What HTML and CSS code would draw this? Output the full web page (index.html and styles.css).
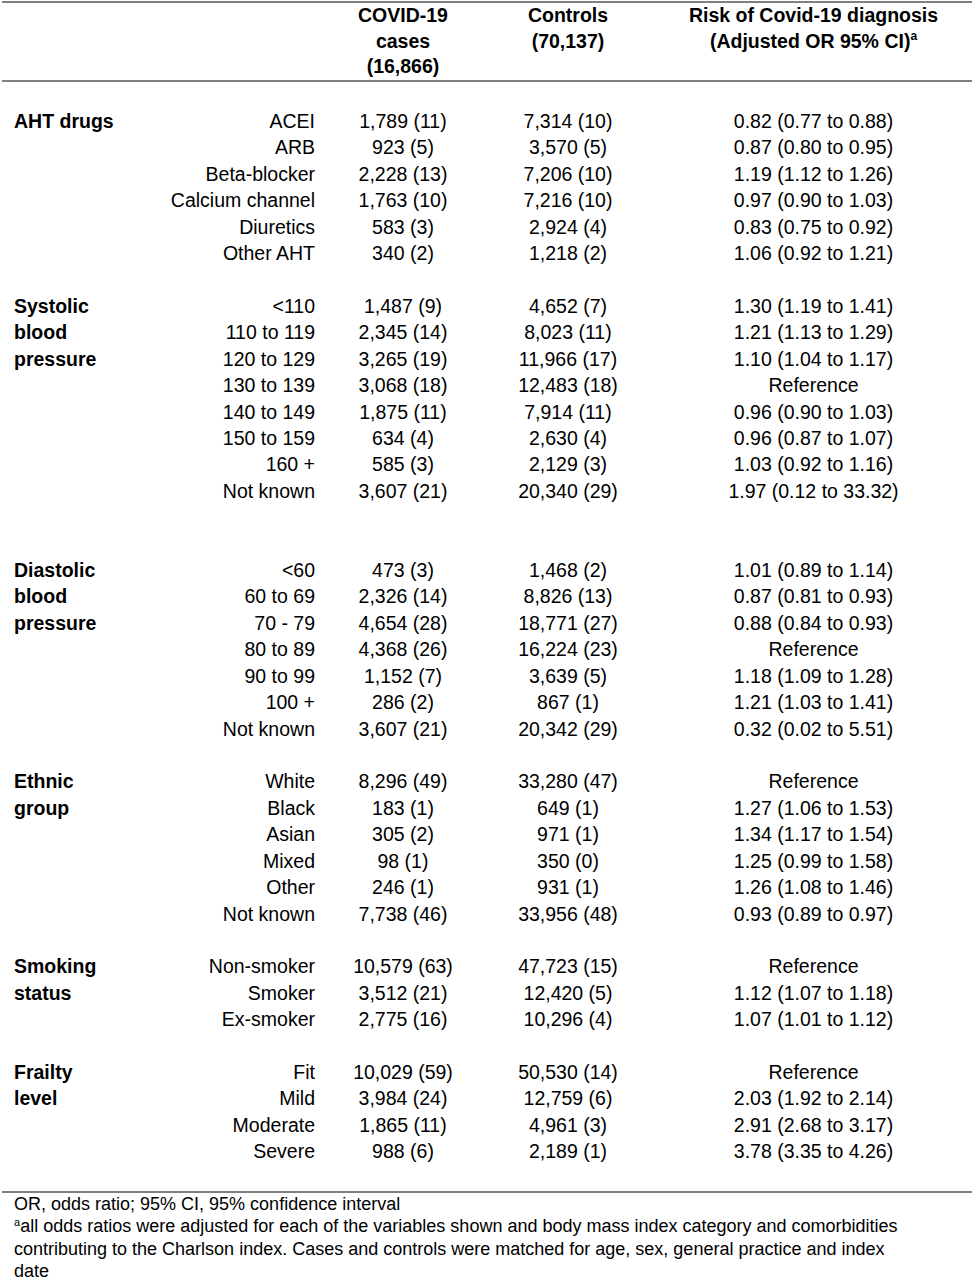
FILE: index.html
```html
<!DOCTYPE html>
<html>

<head>
  <meta charset="utf-8">
  <title>Risk of Covid-19 diagnosis</title>
  <link rel="stylesheet" href="styles.css">
</head>

<body>

  <table class="risk">
    <colgroup>
      <col class="c-group">
      <col class="c-level">
      <col class="c-cases">
      <col class="c-controls">
      <col class="c-risk">
    </colgroup>
    <thead>
      <tr>
        <th></th>
        <th></th>
        <th>COVID-19<br>cases<br>(16,866)</th>
        <th>Controls<br>(70,137)<br>&nbsp;</th>
        <th>Risk of Covid-19 diagnosis<br>(Adjusted OR 95% CI)<sup>a</sup><br>&nbsp;</th>
      </tr>
    </thead>
    <tbody>
      <tr class="gap"><td colspan="5"></td></tr>

      <tr><td class="group">AHT drugs</td><td class="level">ACEI</td><td>1,789 (11)</td><td>7,314 (10)</td><td>0.82 (0.77 to 0.88)</td></tr>
      <tr><td class="group"></td><td class="level">ARB</td><td>923 (5)</td><td>3,570 (5)</td><td>0.87 (0.80 to 0.95)</td></tr>
      <tr><td class="group"></td><td class="level">Beta-blocker</td><td>2,228 (13)</td><td>7,206 (10)</td><td>1.19 (1.12 to 1.26)</td></tr>
      <tr><td class="group"></td><td class="level">Calcium channel</td><td>1,763 (10)</td><td>7,216 (10)</td><td>0.97 (0.90 to 1.03)</td></tr>
      <tr><td class="group"></td><td class="level">Diuretics</td><td>583 (3)</td><td>2,924 (4)</td><td>0.83 (0.75 to 0.92)</td></tr>
      <tr><td class="group"></td><td class="level">Other AHT</td><td>340 (2)</td><td>1,218 (2)</td><td>1.06 (0.92 to 1.21)</td></tr>

      <tr class="gap"><td colspan="5"></td></tr>

      <tr><td class="group">Systolic</td><td class="level">&lt;110</td><td>1,487 (9)</td><td>4,652 (7)</td><td>1.30 (1.19 to 1.41)</td></tr>
      <tr><td class="group">blood</td><td class="level">110 to 119</td><td>2,345 (14)</td><td>8,023 (11)</td><td>1.21 (1.13 to 1.29)</td></tr>
      <tr><td class="group">pressure</td><td class="level">120 to 129</td><td>3,265 (19)</td><td>11,966 (17)</td><td>1.10 (1.04 to 1.17)</td></tr>
      <tr><td class="group"></td><td class="level">130 to 139</td><td>3,068 (18)</td><td>12,483 (18)</td><td>Reference</td></tr>
      <tr><td class="group"></td><td class="level">140 to 149</td><td>1,875 (11)</td><td>7,914 (11)</td><td>0.96 (0.90 to 1.03)</td></tr>
      <tr><td class="group"></td><td class="level">150 to 159</td><td>634 (4)</td><td>2,630 (4)</td><td>0.96 (0.87 to 1.07)</td></tr>
      <tr><td class="group"></td><td class="level">160 +</td><td>585 (3)</td><td>2,129 (3)</td><td>1.03 (0.92 to 1.16)</td></tr>
      <tr><td class="group"></td><td class="level">Not known</td><td>3,607 (21)</td><td>20,340 (29)</td><td>1.97 (0.12 to 33.32)</td></tr>

      <tr class="gap double"><td colspan="5"></td></tr>

      <tr><td class="group">Diastolic</td><td class="level">&lt;60</td><td>473 (3)</td><td>1,468 (2)</td><td>1.01 (0.89 to 1.14)</td></tr>
      <tr><td class="group">blood</td><td class="level">60 to 69</td><td>2,326 (14)</td><td>8,826 (13)</td><td>0.87 (0.81 to 0.93)</td></tr>
      <tr><td class="group">pressure</td><td class="level">70 - 79</td><td>4,654 (28)</td><td>18,771 (27)</td><td>0.88 (0.84 to 0.93)</td></tr>
      <tr><td class="group"></td><td class="level">80 to 89</td><td>4,368 (26)</td><td>16,224 (23)</td><td>Reference</td></tr>
      <tr><td class="group"></td><td class="level">90 to 99</td><td>1,152 (7)</td><td>3,639 (5)</td><td>1.18 (1.09 to 1.28)</td></tr>
      <tr><td class="group"></td><td class="level">100 +</td><td>286 (2)</td><td>867 (1)</td><td>1.21 (1.03 to 1.41)</td></tr>
      <tr><td class="group"></td><td class="level">Not known</td><td>3,607 (21)</td><td>20,342 (29)</td><td>0.32 (0.02 to 5.51)</td></tr>

      <tr class="gap"><td colspan="5"></td></tr>

      <tr><td class="group">Ethnic</td><td class="level">White</td><td>8,296 (49)</td><td>33,280 (47)</td><td>Reference</td></tr>
      <tr><td class="group">group</td><td class="level">Black</td><td>183 (1)</td><td>649 (1)</td><td>1.27 (1.06 to 1.53)</td></tr>
      <tr><td class="group"></td><td class="level">Asian</td><td>305 (2)</td><td>971 (1)</td><td>1.34 (1.17 to 1.54)</td></tr>
      <tr><td class="group"></td><td class="level">Mixed</td><td>98 (1)</td><td>350 (0)</td><td>1.25 (0.99 to 1.58)</td></tr>
      <tr><td class="group"></td><td class="level">Other</td><td>246 (1)</td><td>931 (1)</td><td>1.26 (1.08 to 1.46)</td></tr>
      <tr><td class="group"></td><td class="level">Not known</td><td>7,738 (46)</td><td>33,956 (48)</td><td>0.93 (0.89 to 0.97)</td></tr>

      <tr class="gap"><td colspan="5"></td></tr>

      <tr><td class="group">Smoking</td><td class="level">Non-smoker</td><td>10,579 (63)</td><td>47,723 (15)</td><td>Reference</td></tr>
      <tr><td class="group">status</td><td class="level">Smoker</td><td>3,512 (21)</td><td>12,420 (5)</td><td>1.12 (1.07 to 1.18)</td></tr>
      <tr><td class="group"></td><td class="level">Ex-smoker</td><td>2,775 (16)</td><td>10,296 (4)</td><td>1.07 (1.01 to 1.12)</td></tr>

      <tr class="gap"><td colspan="5"></td></tr>

      <tr><td class="group">Frailty</td><td class="level">Fit</td><td>10,029 (59)</td><td>50,530 (14)</td><td>Reference</td></tr>
      <tr><td class="group">level</td><td class="level">Mild</td><td>3,984 (24)</td><td>12,759 (6)</td><td>2.03 (1.92 to 2.14)</td></tr>
      <tr><td class="group"></td><td class="level">Moderate</td><td>1,865 (11)</td><td>4,961 (3)</td><td>2.91 (2.68 to 3.17)</td></tr>
      <tr><td class="group"></td><td class="level">Severe</td><td>988 (6)</td><td>2,189 (1)</td><td>3.78 (3.35 to 4.26)</td></tr>

      <tr class="gap"><td colspan="5"></td></tr>
    </tbody>
  </table>

  <div class="notes">
    <p>OR, odds ratio; 95% CI, 95% confidence interval</p>
    <p><sup>a</sup>all odds ratios were adjusted for each of the variables shown and body mass index category and comorbidities contributing to the Charlson index. Cases and controls were matched for age, sex, general practice and index date</p>
  </div>

</body>

</html>
```

FILE: styles.css
```css
body {
  margin: 0;
  background: #fff;
  color: #000;
  font-family: "Liberation Sans", Arial, sans-serif;
}

/* Main table */
.risk {
  margin: 1px 0 0 2px;
  width: 970px;
  table-layout: fixed;
  border-collapse: collapse;
  border-top: 2px solid #808080;
  border-bottom: 2px solid #808080;
  font-size: 19.5px;
}

.c-group {
  width: 158px;
}

.c-level {
  width: 165px;
}

.c-cases {
  width: 156px;
}

.c-controls {
  width: 174px;
}

.c-risk {
  width: 317px;
}

.risk th {
  padding: 0;
  font-weight: bold;
  line-height: 25.5px;
  text-align: center;
  vertical-align: top;
}

.risk thead tr {
  border-bottom: 2px solid #808080;
}

.risk sup {
  font-size: 12px;
  line-height: 0;
  vertical-align: 8px;
}

.risk td {
  padding: 0;
  height: 26.42px;
  line-height: 26.42px;
  text-align: center;
  white-space: nowrap;
}

.risk td.group {
  padding-left: 12px;
  text-align: left;
  font-weight: bold;
}

.risk td.level {
  padding-right: 10px;
  text-align: right;
}

.risk .gap td {
  height: 26.42px;
}

.risk .gap.double td {
  height: 52.84px;
}

/* Footnotes */
.notes {
  padding-left: 14px;
  max-width: 894px;
  font-size: 18px;
  line-height: 22.2px;
}

.notes p {
  margin: 0;
}

.notes sup {
  font-size: 11px;
  line-height: 0;
  vertical-align: 6px;
}
```
